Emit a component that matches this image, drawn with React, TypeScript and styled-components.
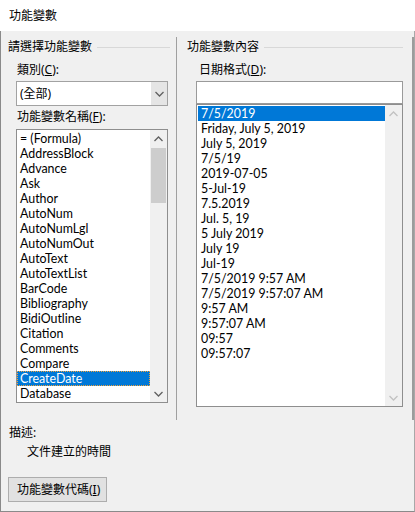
import React from 'react';
import styled, { createGlobalStyle } from 'styled-components';

const GlobalStyle = createGlobalStyle`
  html, body {
    margin: 0;
    padding: 0;
    background: #ffffff;
  }
  body {
    font-family: 'Noto Sans', 'Noto Sans CJK TC', sans-serif;
    font-size: 12px;
    color: #000000;
  }
`;

const Window = styled.div`
  width: 415px;
  height: 512px;
  display: flex;
  flex-direction: column;
  box-sizing: border-box;
`;

const TitleBar = styled.div`
  height: 31px;
  line-height: 31px;
  padding-left: 9px;
  background: #ffffff;
  flex-shrink: 0;
`;

const Body = styled.div`
  flex: 1;
  display: flex;
  flex-direction: column;
  background: #f0f0f0;
  border-left: 1px solid #8a8a8a;
  border-right: 1px solid #a8a8a8;
  border-bottom: 1px solid #8a8a8a;
`;

const Main = styled.div`
  margin-top: 6px;
  height: 383px;
  display: flex;
  padding-left: 7px;
  border-right: 2px solid #9c9c9c;
`;

const Column = styled.div<{ $width: number }>`
  width: ${(p) => p.$width}px;
  flex-shrink: 0;
  display: flex;
  flex-direction: column;
  padding-top: 2px;
`;

const Divider = styled.div`
  width: 1px;
  background: #a0a0a0;
  margin: 0 10px 0 6px;
`;

const GroupHeader = styled.div`
  display: flex;
  align-items: center;
  gap: 5px;
  height: 16px;
  line-height: 16px;
  &::after {
    content: '';
    flex: 1;
    height: 1px;
    background: #d8d8d8;
  }
`;

const Field = styled.div<{ $indent: number }>`
  display: flex;
  flex-direction: column;
  padding-left: ${(p) => p.$indent}px;
`;

const Label = styled.div<{ $top: number; $shift: number }>`
  height: 16px;
  line-height: 16px;
  margin-top: ${(p) => p.$top}px;
  padding-left: ${(p) => p.$shift}px;
  white-space: nowrap;
`;

const Select = styled.div`
  margin-top: 3px;
  width: 152px;
  height: 25px;
  box-sizing: border-box;
  border: 1px solid #a2a2a2;
  background: #ffffff;
  display: flex;
`;

const SelectValue = styled.div`
  flex: 1;
  line-height: 23px;
  padding-left: 3px;
`;

const SelectButton = styled.div`
  width: 16px;
  background: #e5e5e5;
  display: flex;
  align-items: center;
  justify-content: center;
`;

const TextInput = styled.div`
  margin-top: 3px;
  width: 207px;
  height: 23px;
  box-sizing: border-box;
  border: 1px solid #9a9a9a;
  background: #ffffff;
`;

const ListBox = styled.div<{ $width: number; $height: number; $top: number }>`
  margin-top: ${(p) => p.$top}px;
  width: ${(p) => p.$width}px;
  height: ${(p) => p.$height}px;
  box-sizing: border-box;
  border: 1px solid #8e8e8e;
  background: #ffffff;
  display: flex;
  overflow: hidden;
`;

const Items = styled.div<{ $pad: number }>`
  flex: 1;
  display: flex;
  flex-direction: column;
  padding: 1px 0 0 ${(p) => p.$pad}px;
  overflow: hidden;
  font-family: Lato, 'Noto Sans', sans-serif;
  font-size: 12.4px;
`;

const Item = styled.div<{ $selected?: boolean; $focused?: boolean }>`
  height: 15px;
  line-height: 15px;
  padding-left: 3px;
  white-space: nowrap;
  flex-shrink: 0;
  box-sizing: border-box;
  background: ${(p) => (p.$selected ? '#0078d7' : 'transparent')};
  color: ${(p) => (p.$selected ? '#ffffff' : '#000000')};
  outline: ${(p) => (p.$focused ? '1px dotted #f2a23a' : 'none')};
  outline-offset: -1px;
`;

const ScrollBar = styled.div`
  width: 17px;
  flex-shrink: 0;
  background: #f0f0f0;
  display: flex;
  flex-direction: column;
`;

const ScrollArrow = styled.div`
  height: 17px;
  display: flex;
  align-items: center;
  justify-content: center;
  flex-shrink: 0;
`;

const Track = styled.div`
  flex: 1;
  display: flex;
  flex-direction: column;
`;

const Thumb = styled.div<{ $top: number; $height: number }>`
  margin: ${(p) => p.$top}px 1px 0 1px;
  height: ${(p) => p.$height}px;
  background: #cdcdcd;
`;

const Footer = styled.div`
  display: flex;
  flex-direction: column;
  align-items: flex-start;
  padding-left: 7px;
`;

const Desc = styled.div<{ $top: number; $indent: number }>`
  height: 16px;
  line-height: 16px;
  margin-top: ${(p) => p.$top}px;
  padding-left: ${(p) => p.$indent}px;
`;

const Button = styled.div`
  margin-top: 17px;
  width: 99px;
  height: 25px;
  box-sizing: border-box;
  border: 1px solid #adadad;
  background: #e1e1e1;
  line-height: 23px;
  padding-left: 8px;
  white-space: nowrap;
`;

function Chevron({ up, color }: { up?: boolean; color: string }) {
  return (
    <svg width="9" height="6" viewBox="0 0 9 6">
      <path
        d={up ? 'M0.5 5 L4.5 1 L8.5 5' : 'M0.5 1 L4.5 5 L8.5 1'}
        fill="none"
        stroke={color}
        strokeWidth="1.3"
      />
    </svg>
  );
}

const fieldNames = [
  '= (Formula)',
  'AddressBlock',
  'Advance',
  'Ask',
  'Author',
  'AutoNum',
  'AutoNumLgl',
  'AutoNumOut',
  'AutoText',
  'AutoTextList',
  'BarCode',
  'Bibliography',
  'BidiOutline',
  'Citation',
  'Comments',
  'Compare',
  'CreateDate',
  'Database',
];

const dateFormats = [
  '7/5/2019',
  'Friday, July 5, 2019',
  'July 5, 2019',
  '7/5/19',
  '2019-07-05',
  '5-Jul-19',
  '7.5.2019',
  'Jul. 5, 19',
  '5 July 2019',
  'July 19',
  'Jul-19',
  '7/5/2019 9:57 AM',
  '7/5/2019 9:57:07 AM',
  '9:57 AM',
  '9:57:07 AM',
  '09:57',
  '09:57:07',
];

export default function App() {
  return (
    <>
      <GlobalStyle />
      <Window>
        <TitleBar>功能變數</TitleBar>
        <Body>
          <Main>
            <Column $width={162}>
              <GroupHeader>請選擇功能變數</GroupHeader>
              <Field $indent={8}>
                <Label $top={7} $shift={1}>
                  類別(<u>C</u>):
                </Label>
                <Select>
                  <SelectValue>(全部)</SelectValue>
                  <SelectButton>
                    <Chevron color="#606060" />
                  </SelectButton>
                </Select>
                <Label $top={3} $shift={1}>
                  功能變數名稱(<u>F</u>):
                </Label>
                <ListBox $width={152} $height={274} $top={4}>
                  <Items $pad={0}>
                    {fieldNames.map((name) => (
                      <Item
                        key={name}
                        $selected={name === 'CreateDate'}
                        $focused={name === 'CreateDate'}
                      >
                        {name}
                      </Item>
                    ))}
                  </Items>
                  <ScrollBar>
                    <ScrollArrow>
                      <Chevron up color="#606060" />
                    </ScrollArrow>
                    <Track>
                      <Thumb $top={1} $height={55} />
                    </Track>
                    <ScrollArrow>
                      <Chevron color="#606060" />
                    </ScrollArrow>
                  </ScrollBar>
                </ListBox>
              </Field>
            </Column>
            <Divider />
            <Column $width={216}>
              <GroupHeader>功能變數內容</GroupHeader>
              <Field $indent={9}>
                <Label $top={7} $shift={3}>
                  日期格式(<u>D</u>):
                </Label>
                <TextInput />
                <ListBox $width={207} $height={303} $top={0}>
                  <Items $pad={1}>
                    {dateFormats.map((f, i) => (
                      <Item key={f} $selected={i === 0}>
                        {f}
                      </Item>
                    ))}
                  </Items>
                  <ScrollBar>
                    <ScrollArrow>
                      <Chevron up color="#c2c2c2" />
                    </ScrollArrow>
                    <Track />
                    <ScrollArrow>
                      <Chevron color="#c2c2c2" />
                    </ScrollArrow>
                  </ScrollBar>
                </ListBox>
              </Field>
            </Column>
          </Main>
          <Footer>
            <Desc $top={5} $indent={1}>
              描述:
            </Desc>
            <Desc $top={3} $indent={19}>
              文件建立的時間
            </Desc>
            <Button>
              功能變數代碼(<u>I</u>)
            </Button>
          </Footer>
        </Body>
      </Window>
    </>
  );
}
